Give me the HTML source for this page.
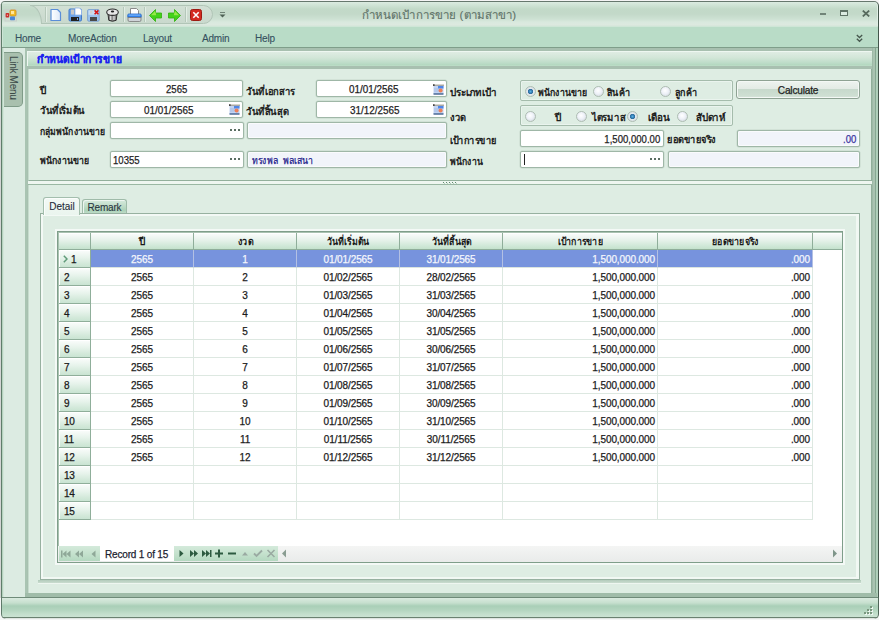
<!DOCTYPE html>
<html><head><meta charset="utf-8">
<style>
*{box-sizing:border-box;margin:0;padding:0}
html,body{width:879px;height:620px;overflow:hidden;background:#f4f4f4}
body{font-family:"Liberation Sans",sans-serif;font-size:11px;color:#222;position:relative;-webkit-text-stroke-width:0.25px}
.a{position:absolute}
.win{left:1px;top:1px;width:878px;height:618px;background:#dfeee5;border:1px solid #5f7d6a;border-top-color:#66776d;border-right-color:#43564b;border-radius:4px 5px 0 0}
.title{left:2px;top:2px;width:875px;height:24px;background:linear-gradient(#dcebe1 0,#d3e6d9 2px,#c2d9c8 7px,#c3d9c9 12px,#cde1d3 17px,#d9e9de 20px,#dde9e0 23px,#d3e5d8 24px);border-radius:3px 4px 0 0}
.menubar{left:2px;top:26px;width:876px;height:22px;background:#b9dcc7;border-top:1px solid #cfe6d7;border-bottom:1px solid #7f9e8a;box-shadow:inset 1px 0 0 #cde5d6}
.menubar span{position:absolute;top:6px;color:#34505e;font-size:10px;letter-spacing:-0.2px;-webkit-text-stroke-width:0.1px}
.lbl{position:absolute;font-size:10px;color:#161616;white-space:nowrap;transform-origin:0 0;-webkit-text-stroke:0.4px #161616}
.inp{position:absolute;height:17px;background:#fff;border:1px solid #9fb7a7;border-radius:2px;box-shadow:0 0 0 0.5px #c5d7cb}
.inp .t{position:absolute;top:1px;font-size:11px;line-height:14px;color:#1e1e1e;white-space:nowrap;letter-spacing:0;transform:scaleX(0.87);transform-origin:0 0}
.inp .t.rt{transform-origin:100% 0}
.dis{background:#f1f4fa;box-shadow:inset 0 0 0 1px #fafbfd,0 0 0 0.5px #c5d7cb}
.grp{position:absolute;border:1px solid #a5bcac;border-radius:2px;box-shadow:inset 0 0 0 1px #eaf4ee}
.rad{position:absolute;width:11px;height:11px;border-radius:50%;border:1px solid #aebdb3;background:radial-gradient(circle at 45% 40%,#ffffff 0,#eef1f8 45%,#c9d2d6 100%)}
.rad.on{background:radial-gradient(circle at 50% 50%,#5ab0e0 0,#2d72ab 2px,#3a6f95 2.4px,#e4eaee 3px,#cdd5d9 100%)}
.btn{border:1px solid #8ea293;border-radius:3px;background:linear-gradient(#eef3ef 0,#e3ebe5 45%,#c7d9cc 50%,#cfdfd3 90%,#e6efe8);box-shadow:inset 0 0 0 1px #f4f8f5;text-align:center;line-height:18px;font-size:11px;color:#222;letter-spacing:-0.2px}
.gh{position:absolute;height:17px;background:linear-gradient(#fbfdfc,#e6f2ea 45%,#d0e8d8 80%,#c4e2cd);border-right:1px solid #8fae9a;border-bottom:1px solid #8fae9a;box-shadow:inset 0 1px 0 #fff;font-size:10px;font-weight:bold;text-align:center;line-height:17px;color:#1a1a1a;white-space:nowrap;-webkit-text-stroke-width:0}
.rh{position:absolute;left:59px;width:32px;height:18px;background:linear-gradient(#fbfdfc,#e9f4ed 40%,#d3e9da 80%,#c9e4d2);border-right:1px solid #8fae9a;border-bottom:1px solid #8fae9a;box-shadow:inset 1px 1px 0 #fff}
.rh span{position:absolute;top:3px;font-size:10px;line-height:14px;color:#1a1a1a;letter-spacing:-0.3px}
.c{position:absolute;height:18px;border-right:1px solid #dde8e1;border-bottom:1px solid #dde8e1;font-size:10px;line-height:17px;text-align:center;white-space:nowrap;color:#1c1c1c;letter-spacing:-0.1px;padding-top:1px}
.c.r{text-align:right;padding-right:2px}
.c.s{background:#7793dd;color:#f4f6fc;border-right-color:#b3c0e3;border-bottom-color:#dbe4df}
</style></head><body>
<div class="a" style="left:0;top:4px;width:1px;height:612px;background:#d3d5d4"></div>
<div class="a win"></div>
<div class="a title"></div>
<!-- QAT pill -->
<div class="a" style="left:30px;top:5px;width:183px;height:19px;background:linear-gradient(#d2e0d5,#c9d9cd);border:1px solid #b1c5b7;border-radius:0 10px 10px 0"></div>
<div class="a" style="left:2px;top:5px;width:40px;height:19px;background:linear-gradient(#c8dccd 0,#c2d9c8 4px,#c3d9c9 9px,#cde1d3 14px,#d9e9de 17px,#dde9e0 19px);border-top:1px solid #b1c5b7;border-right:1px solid #b1c5b7;border-top-right-radius:12px 19px"></div>
<div class="a" style="left:2px;top:4px;width:28px;height:2px;background:#cbdfd0"></div>
<svg class="a" style="left:4px;top:9px" width="14" height="13" viewBox="0 0 14 13">
<rect x="1" y="0.5" width="11.5" height="11.5" fill="none" stroke="#c9cfcb" stroke-width="1"/>
<rect x="6" y="1" width="6" height="6" rx="1" fill="#f2bd2a" stroke="#c8901a" stroke-width="0.8"/>
<rect x="7" y="2" width="3" height="3" fill="#ffe69a"/>
<rect x="1.6" y="4" width="3.6" height="4.6" rx="0.8" fill="#c9302c"/>
<rect x="2.8" y="5.6" width="1.2" height="1.2" fill="#f6b0b0"/>
<rect x="6" y="7.6" width="5" height="3.6" rx="0.8" fill="#4c86d8"/>
</svg>
<div class="a" style="left:45px;top:7px;width:1px;height:15px;background:#b5c8ba;box-shadow:1px 0 0 #e3eee6"></div>
<div class="a" style="left:123px;top:7px;width:1px;height:15px;background:#b5c8ba;box-shadow:1px 0 0 #e3eee6"></div>
<div class="a" style="left:144px;top:7px;width:1px;height:15px;background:#b5c8ba;box-shadow:1px 0 0 #e3eee6"></div>
<div class="a" style="left:185px;top:7px;width:1px;height:15px;background:#b5c8ba;box-shadow:1px 0 0 #e3eee6"></div>
<!-- new doc -->
<svg class="a" style="left:50px;top:8px" width="12" height="14" viewBox="0 0 12 14">
<defs><linearGradient id="gd" x1="0" x2="1"><stop offset="0" stop-color="#ffffff"/><stop offset="1" stop-color="#dfe9f8"/></linearGradient></defs>
<path d="M1 1.5 H7.5 L10.5 4.5 V12.5 H1 Z" fill="url(#gd)" stroke="#5a8ed8" stroke-width="1.2" stroke-linejoin="round"/>
</svg>
<!-- save -->
<svg class="a" style="left:68px;top:7px" width="15" height="15" viewBox="0 0 15 15">
<rect x="1" y="2" width="12.5" height="12" rx="1.2" fill="#6fa4e8" stroke="#3f78c8" stroke-width="1"/>
<rect x="3" y="2.5" width="3" height="5" fill="#c8c8c8"/>
<path d="M7 1 H11.5 L13.5 3 V8 H7 Z" fill="#fff" stroke="#8fb4e8" stroke-width="0.8"/>
<rect x="3" y="10" width="8" height="4" fill="#222"/>
<rect x="9" y="11" width="1" height="2" fill="#6fa4e8"/>
</svg>
<!-- save x -->
<svg class="a" style="left:87px;top:9px" width="13" height="13" viewBox="0 0 13 13">
<rect x="0.6" y="0.6" width="11.6" height="11.6" rx="1.2" fill="#9cc4ee" stroke="#7b9fcf" stroke-width="0.9"/>
<rect x="1.5" y="1.3" width="9.5" height="4.5" fill="#c6def6"/>
<rect x="3" y="1.6" width="2.4" height="3" fill="#d2d2d2"/>
<rect x="3" y="8" width="7" height="4" fill="#4a4a4a"/>
<path d="M7.6 1.4 L11.4 5.2 M11.4 1.4 L7.6 5.2" stroke="#d41414" stroke-width="1.6"/>
</svg>
<!-- trash -->
<svg class="a" style="left:106px;top:8px" width="13" height="14" viewBox="0 0 13 14">
<path d="M1.8 4.5 L2.8 12.3 Q6.5 14.2 10.2 12.3 L11.2 4.5 Z" fill="#8c8c8c" stroke="#2e2e2e" stroke-width="1"/>
<rect x="4" y="7" width="1.3" height="5" fill="#d9d9d9"/><rect x="7.3" y="7" width="1.3" height="5" fill="#d9d9d9"/>
<ellipse cx="6.5" cy="4.2" rx="5.8" ry="3.2" fill="#e6e6e6" stroke="#2e2e2e" stroke-width="1.1"/>
<ellipse cx="6.5" cy="3.6" rx="1.7" ry="1" fill="#222"/>
</svg>
<!-- printer -->
<svg class="a" style="left:127px;top:8px" width="15" height="14" viewBox="0 0 15 14">
<path d="M3.5 0.5 H9.5 L11.5 2.5 V7 H3.5 Z" fill="#fff" stroke="#8a8a8a" stroke-width="1"/>
<rect x="0.8" y="6" width="13.4" height="4" rx="1" fill="#2f7ee8" stroke="#1f5fc0" stroke-width="0.8"/>
<rect x="1.5" y="6.5" width="12" height="1.2" fill="#78b8ff"/>
<path d="M1 9.5 H14 V12 Q14 13.5 12.5 13.5 H2.5 Q1 13.5 1 12 Z" fill="#cfd3d8" stroke="#777" stroke-width="0.8"/>
</svg>
<!-- left arrow -->
<svg class="a" style="left:149px;top:9px" width="13" height="13" viewBox="0 0 13 13">
<path d="M0.5 6.5 L6.5 0.5 V4 H12.5 V9 H6.5 V12.5 Z" fill="#44d21a" stroke="#2fb00c" stroke-width="0.8" stroke-linejoin="round"/>
<path d="M6 2 L2 6.3 H7 V4.5" fill="#b8f25a" opacity="0.7"/>
</svg>
<!-- right arrow -->
<svg class="a" style="left:168px;top:9px" width="13" height="13" viewBox="0 0 13 13">
<path d="M12.5 6.5 L6.5 0.5 V4 H0.5 V9 H6.5 V12.5 Z" fill="#44d21a" stroke="#2fb00c" stroke-width="0.8" stroke-linejoin="round"/>
<path d="M7 2 L11 6.3 H6 V4.5" fill="#b8f25a" opacity="0.7"/>
</svg>
<!-- red x -->
<svg class="a" style="left:190px;top:9px" width="12" height="12" viewBox="0 0 12 12">
<rect x="0.5" y="0.5" width="11" height="11" rx="2" fill="#d42a20" stroke="#9c1a12" stroke-width="1"/>
<path d="M3.3 3.3 L8.7 8.7 M8.7 3.3 L3.3 8.7" stroke="#fff" stroke-width="1.6"/>
</svg>
<!-- dropdown -->
<svg class="a" style="left:219px;top:12px" width="7" height="6" viewBox="0 0 7 6">
<rect x="1" y="0" width="5" height="1" fill="#6f8276"/><path d="M0.5 2.5 H6.5 L3.5 5.5 Z" fill="#4f6256"/>
</svg>
<div class="a" style="left:299px;top:6px;width:280px;text-align:center;font-size:11.5px;letter-spacing:0.12px;color:#5f7268;-webkit-text-stroke-width:0.1px">กำหนดเป้าการขาย (ตามสาขา)</div>
<!-- window buttons -->
<div class="a" style="left:820px;top:13px;width:6px;height:2px;background:#687a6f;opacity:.9"></div>
<div class="a" style="left:840px;top:10px;width:8px;height:6px;border:1px solid #5f7266;border-top-width:2px;background:#dcebe1"></div>
<svg class="a" style="left:862px;top:10px" width="8" height="7" viewBox="0 0 8 7"><path d="M0.8 0.6 L7.2 6.4 M7.2 0.6 L0.8 6.4" stroke="#56695d" stroke-width="1.8"/></svg>
<div class="a menubar">
<span style="left:13px">Home</span>
<span style="left:66px">MoreAction</span>
<span style="left:141px">Layout</span>
<span style="left:200px">Admin</span>
<span style="left:253px">Help</span>
</div>
<svg class="a" style="left:856px;top:34px" width="7" height="9" viewBox="0 0 7 9"><path d="M0.8 1 L3.5 3.5 L6.2 1 M0.8 4.8 L3.5 7.3 L6.2 4.8" fill="none" stroke="#46574d" stroke-width="1.3"/></svg>
<!-- left link menu -->
<div class="a" style="left:2px;top:48px;width:23px;height:550px;background:#dcebe2;border-left:1px solid #b5d3bf;box-shadow:inset 1px 0 0 #d2e5d8"></div>
<div class="a" style="left:4px;top:52px;width:19px;height:55px;background:#a9c0ae;border:1px solid #7f9b88;border-left:none;border-radius:0 5px 5px 0"></div>
<div class="a" style="left:-8px;top:71px;width:42px;height:12px;transform:rotate(90deg);font-size:10px;line-height:12px;letter-spacing:-0.3px;color:#3c4a48;-webkit-text-stroke-width:0.05px;text-align:center;white-space:nowrap">Link Menu</div>
<!-- main panel border -->
<div class="a" style="left:25px;top:48px;width:853px;height:550px;background:#a8c0b0"></div>
<div class="a" style="left:25px;top:48px;width:2px;height:550px;background:#a9c4b2"></div>
<div class="a" style="left:27px;top:51px;width:847px;height:15px;background:linear-gradient(#eef7f1 0,#eef7f1 1px,#dfece3 1px,#d2e6d8 45%,#bddcc8 80%,#b3d8bf 93%,#c0dfca);border-left:1px solid #eef7f1;border-right:1px solid #c9dccf"></div>
<div class="a" style="left:37px;top:50px;font-size:11px;font-weight:bold;color:#1a22ee;white-space:nowrap;transform:scaleX(0.93);transform-origin:0 0">กำหนดเป้าการขาย</div>
<div class="a" style="left:28px;top:69px;width:844px;height:112px;background:#deede3;border-left:1px solid #c6dccd;border-right:1px solid #90ae9a;border-bottom:1px solid #93b09c"></div>
<!-- splitter -->
<div class="a" style="left:28px;top:181px;width:844px;height:3px;background:#eef6f0"></div>
<div class="a" style="left:28px;top:184px;width:844px;height:1px;background:#9ab8a3"></div>
<div class="a" style="left:443px;top:182px;width:15px;height:1px;background:repeating-linear-gradient(90deg,#5f8a6e 0 1px,transparent 1px 3px)"></div><div class="a" style="left:444px;top:183px;width:15px;height:1px;background:repeating-linear-gradient(90deg,#b8d0c0 0 1px,transparent 1px 3px)"></div>
<div class="a" style="left:28px;top:185px;width:844px;height:408px;background:#deede3;border-left:1px solid #c6dccd;border-right:1px solid #90ae9a"></div>
<div class="a" style="left:872px;top:48px;width:4px;height:550px;background:#a9c3b1;border-left:1px solid #9db9a6"></div>
<div class="a" style="left:875px;top:48px;width:1px;height:550px;background:#86a892"></div>
<div class="a" style="left:876px;top:48px;width:2px;height:550px;background:#b0d0bb"></div>
<!-- form -->
<div class="lbl" style="left:40px;top:83px;transform:scaleX(1)">ปี</div>
<div class="lbl" style="left:40px;top:103px;transform:scaleX(0.93)">วันที่เริ่มต้น</div>
<div class="lbl" style="left:40px;top:124px;transform:scaleX(0.86)">กลุ่มพนักงานขาย</div>
<div class="lbl" style="left:40px;top:153px;transform:scaleX(0.87)">พนักงานขาย</div>
<div class="lbl" style="left:246px;top:84px;transform:scaleX(0.94)">วันที่เอกสาร</div>
<div class="lbl" style="left:246px;top:104px;transform:scaleX(0.94)">วันที่สิ้นสุด</div>
<div class="lbl" style="left:450px;top:85px;transform:scaleX(0.98)">ประเภทเป้า</div>
<div class="lbl" style="left:450px;top:110px;transform:scaleX(0.93)">งวด</div>
<div class="lbl" style="left:450px;top:133px;transform:scaleX(0.92)">เป้าการขาย</div>
<div class="lbl" style="left:667px;top:132px;transform:scaleX(0.92)">ยอดขายจริง</div>
<div class="lbl" style="left:450px;top:154px;transform:scaleX(0.86)">พนักงาน</div>
<div class="inp" style="left:110px;top:80px;width:133px"><span class="t" style="left:55px">2565</span></div>
<div class="inp" style="left:110px;top:101px;width:133px"><span class="t" style="left:33px;transform:scaleX(0.9)">01/01/2565</span></div><svg class="a" style="left:229px;top:104px" width="11" height="11" viewBox="0 0 11 11"><rect x="0.5" y="1.5" width="10" height="8.5" fill="#c2d4f4"/><rect x="5" y="2" width="5.5" height="2.5" fill="#4f86e6"/><rect x="0" y="0.6" width="11" height="1.2" fill="#9c9a90"/><rect x="0" y="0.3" width="1.6" height="1.6" fill="#3a3a3a"/><path d="M1 5 H6 M1 7 H6" stroke="#9bb2d8" stroke-width="0.7"/><circle cx="7.6" cy="6.6" r="2" fill="#ee7f56"/><rect x="0.5" y="9.3" width="10" height="1.4" fill="#41618f"/></svg>
<div class="inp" style="left:110px;top:122px;width:134px"></div><div class="a" style="left:230px;top:129px;width:11px;height:2px;background:radial-gradient(circle at 1px 1px,#5a6e62 0.75px,transparent 1.1px) 0 0/4px 2px repeat-x"></div>
<div class="inp" style="left:110px;top:151px;width:134px"><span class="t" style="left:2px">10355</span></div><div class="a" style="left:230px;top:158px;width:11px;height:2px;background:radial-gradient(circle at 1px 1px,#5a6e62 0.75px,transparent 1.1px) 0 0/4px 2px repeat-x"></div>
<div class="inp" style="left:316px;top:80px;width:131px"><span class="t" style="left:32px;transform:scaleX(0.9)">01/01/2565</span></div><svg class="a" style="left:433px;top:84px" width="11" height="11" viewBox="0 0 11 11"><rect x="0.5" y="1.5" width="10" height="8.5" fill="#c2d4f4"/><rect x="5" y="2" width="5.5" height="2.5" fill="#4f86e6"/><rect x="0" y="0.6" width="11" height="1.2" fill="#9c9a90"/><rect x="0" y="0.3" width="1.6" height="1.6" fill="#3a3a3a"/><path d="M1 5 H6 M1 7 H6" stroke="#9bb2d8" stroke-width="0.7"/><circle cx="7.6" cy="6.6" r="2" fill="#ee7f56"/><rect x="0.5" y="9.3" width="10" height="1.4" fill="#41618f"/></svg>
<div class="inp" style="left:316px;top:101px;width:131px"><span class="t" style="left:33px;transform:scaleX(0.9)">31/12/2565</span></div><svg class="a" style="left:433px;top:104px" width="11" height="11" viewBox="0 0 11 11"><rect x="0.5" y="1.5" width="10" height="8.5" fill="#c2d4f4"/><rect x="5" y="2" width="5.5" height="2.5" fill="#4f86e6"/><rect x="0" y="0.6" width="11" height="1.2" fill="#9c9a90"/><rect x="0" y="0.3" width="1.6" height="1.6" fill="#3a3a3a"/><path d="M1 5 H6 M1 7 H6" stroke="#9bb2d8" stroke-width="0.7"/><circle cx="7.6" cy="6.6" r="2" fill="#ee7f56"/><rect x="0.5" y="9.3" width="10" height="1.4" fill="#41618f"/></svg>
<div class="inp dis" style="left:247px;top:122px;width:200px"></div>
<div class="inp dis" style="left:247px;top:151px;width:200px"><span class="t" style="left:4px;color:#22228a;font-size:10px;top:2px">ทรงพล&nbsp; พลเสนา</span></div>
<div class="grp" style="left:520px;top:80px;width:213px;height:21px"></div>
<div class="grp" style="left:520px;top:105px;width:213px;height:21px"></div>
<div class="rad on" style="left:525px;top:86px"></div><div class="lbl" style="left:538px;top:85px;transform:scaleX(0.87)">พนักงานขาย</div><div class="rad" style="left:593px;top:86px"></div><div class="lbl" style="left:607px;top:85px;transform:scaleX(0.9)">สินค้า</div><div class="rad" style="left:660px;top:86px"></div><div class="lbl" style="left:675px;top:85px;transform:scaleX(0.9)">ลูกค้า</div>
<div class="rad" style="left:525px;top:111px"></div><div class="lbl" style="left:555px;top:110px;transform:scaleX(1)">ปี</div><div class="rad" style="left:576px;top:111px"></div><div class="lbl" style="left:592px;top:110px;transform:scaleX(0.95)">ไตรมาส</div><div class="rad on" style="left:627px;top:111px"></div><div class="lbl" style="left:648px;top:110px;transform:scaleX(0.98)">เดือน</div><div class="rad" style="left:677px;top:111px"></div><div class="lbl" style="left:696px;top:110px;transform:scaleX(0.97)">สัปดาห์</div>
<div class="a btn" style="left:736px;top:80px;width:124px;height:19px"><span style="display:inline-block;transform:scaleX(0.92)">Calculate</span></div>
<div class="inp" style="left:520px;top:130px;width:144px"><span class="t rt" style="right:3px">1,500,000.00</span></div>
<div class="inp dis" style="left:737px;top:130px;width:123px"><span class="t rt" style="right:3px;color:#3a35a0">.00</span></div>
<div class="inp" style="left:520px;top:151px;width:144px"><div class="a" style="left:3px;top:2px;width:1px;height:11px;background:#222"></div></div><div class="a" style="left:650px;top:158px;width:11px;height:2px;background:radial-gradient(circle at 1px 1px,#5a6e62 0.75px,transparent 1.1px) 0 0/4px 2px repeat-x"></div>
<div class="inp dis" style="left:668px;top:151px;width:192px"></div>
<!-- tabs -->
<div class="a" style="left:40px;top:213px;width:820px;height:367px;background:#deede3;border:1px solid #97b1a0;box-shadow:inset 2px 2px 0 #f3f9f5,inset -3px -2px 0 #f1f8f3"></div>
<div class="a" style="left:43px;top:197px;width:37px;height:18px;background:linear-gradient(#f3f9f5,#eaf5ee);border:1px solid #a3bead;border-bottom:none;border-radius:3px 3px 0 0;box-shadow:inset 1px 1px 0 #fbfdfc"></div>
<div class="a" style="left:43px;top:201px;width:37px;text-align:center;font-size:10px;letter-spacing:0px;text-indent:1px;color:#242c3a;white-space:nowrap;-webkit-text-stroke-width:0.1px">Detail</div>
<div class="a" style="left:82px;top:199px;width:45px;height:14px;background:linear-gradient(#d6eadd,#c0ddc9 45%,#acd2b9 80%,#bcdbc6);border:1px solid #9fbba9;border-bottom:none;border-radius:3px 3px 0 0;box-shadow:inset 1px 1px 0 #eef6f0"></div>
<div class="a" style="left:82px;top:202px;width:45px;text-align:center;font-size:10px;letter-spacing:-0.2px;color:#2a3640;white-space:nowrap;-webkit-text-stroke-width:0.1px">Remark</div>
<!-- grid -->
<div class="a" style="left:55px;top:229px;width:790px;height:336px;background:#f4f9f6"></div>
<div class="a" style="left:57px;top:231px;width:786px;height:332px;background:#fff;border:1px solid #7f9e8a;box-shadow:inset 1px 1px 0 #a9c2b1"></div>
<div class="gh" style="left:59px;top:233px;width:32px"></div>
<div class="gh" style="left:91px;top:233px;width:103px"><span style="display:inline-block;transform:scaleX(1)">ปี</span></div>
<div class="gh" style="left:194px;top:233px;width:103px"><span style="display:inline-block;transform:scaleX(0.9)">งวด</span></div>
<div class="gh" style="left:297px;top:233px;width:103px"><span style="display:inline-block;transform:scaleX(0.88)">วันที่เริ่มต้น</span></div>
<div class="gh" style="left:400px;top:233px;width:103px"><span style="display:inline-block;transform:scaleX(0.88)">วันที่สิ้นสุด</span></div>
<div class="gh" style="left:503px;top:233px;width:155px"><span style="display:inline-block;transform:scaleX(0.88)">เป้าการขาย</span></div>
<div class="gh" style="left:658px;top:233px;width:155px"><span style="display:inline-block;transform:scaleX(0.88)">ยอดขายจริง</span></div>
<div class="gh" style="left:813px;top:233px;width:29px;border-right:none"></div>
<div class="rh" style="top:250px"><svg class="a" style="left:4px;top:5px" width="5" height="8" viewBox="0 0 5 8"><path d="M0.8 0.8 L4 4 L0.8 7.2" fill="none" stroke="#5f9a78" stroke-width="1.5"/></svg><span style="left:12px">1</span></div>
<div class="c s" style="left:91px;top:250px;width:103px">2565</div>
<div class="c s" style="left:194px;top:250px;width:103px">1</div>
<div class="c s" style="left:297px;top:250px;width:103px">01/01/2565</div>
<div class="c s" style="left:400px;top:250px;width:103px">31/01/2565</div>
<div class="c r s" style="left:503px;top:250px;width:155px">1,500,000.000</div>
<div class="c r s" style="left:658px;top:250px;width:155px">.000</div>
<div class="rh" style="top:268px"><span style="left:5px">2</span></div>
<div class="c" style="left:91px;top:268px;width:103px">2565</div>
<div class="c" style="left:194px;top:268px;width:103px">2</div>
<div class="c" style="left:297px;top:268px;width:103px">01/02/2565</div>
<div class="c" style="left:400px;top:268px;width:103px">28/02/2565</div>
<div class="c r" style="left:503px;top:268px;width:155px">1,500,000.000</div>
<div class="c r" style="left:658px;top:268px;width:155px">.000</div>
<div class="rh" style="top:286px"><span style="left:5px">3</span></div>
<div class="c" style="left:91px;top:286px;width:103px">2565</div>
<div class="c" style="left:194px;top:286px;width:103px">3</div>
<div class="c" style="left:297px;top:286px;width:103px">01/03/2565</div>
<div class="c" style="left:400px;top:286px;width:103px">31/03/2565</div>
<div class="c r" style="left:503px;top:286px;width:155px">1,500,000.000</div>
<div class="c r" style="left:658px;top:286px;width:155px">.000</div>
<div class="rh" style="top:304px"><span style="left:5px">4</span></div>
<div class="c" style="left:91px;top:304px;width:103px">2565</div>
<div class="c" style="left:194px;top:304px;width:103px">4</div>
<div class="c" style="left:297px;top:304px;width:103px">01/04/2565</div>
<div class="c" style="left:400px;top:304px;width:103px">30/04/2565</div>
<div class="c r" style="left:503px;top:304px;width:155px">1,500,000.000</div>
<div class="c r" style="left:658px;top:304px;width:155px">.000</div>
<div class="rh" style="top:322px"><span style="left:5px">5</span></div>
<div class="c" style="left:91px;top:322px;width:103px">2565</div>
<div class="c" style="left:194px;top:322px;width:103px">5</div>
<div class="c" style="left:297px;top:322px;width:103px">01/05/2565</div>
<div class="c" style="left:400px;top:322px;width:103px">31/05/2565</div>
<div class="c r" style="left:503px;top:322px;width:155px">1,500,000.000</div>
<div class="c r" style="left:658px;top:322px;width:155px">.000</div>
<div class="rh" style="top:340px"><span style="left:5px">6</span></div>
<div class="c" style="left:91px;top:340px;width:103px">2565</div>
<div class="c" style="left:194px;top:340px;width:103px">6</div>
<div class="c" style="left:297px;top:340px;width:103px">01/06/2565</div>
<div class="c" style="left:400px;top:340px;width:103px">30/06/2565</div>
<div class="c r" style="left:503px;top:340px;width:155px">1,500,000.000</div>
<div class="c r" style="left:658px;top:340px;width:155px">.000</div>
<div class="rh" style="top:358px"><span style="left:5px">7</span></div>
<div class="c" style="left:91px;top:358px;width:103px">2565</div>
<div class="c" style="left:194px;top:358px;width:103px">7</div>
<div class="c" style="left:297px;top:358px;width:103px">01/07/2565</div>
<div class="c" style="left:400px;top:358px;width:103px">31/07/2565</div>
<div class="c r" style="left:503px;top:358px;width:155px">1,500,000.000</div>
<div class="c r" style="left:658px;top:358px;width:155px">.000</div>
<div class="rh" style="top:376px"><span style="left:5px">8</span></div>
<div class="c" style="left:91px;top:376px;width:103px">2565</div>
<div class="c" style="left:194px;top:376px;width:103px">8</div>
<div class="c" style="left:297px;top:376px;width:103px">01/08/2565</div>
<div class="c" style="left:400px;top:376px;width:103px">31/08/2565</div>
<div class="c r" style="left:503px;top:376px;width:155px">1,500,000.000</div>
<div class="c r" style="left:658px;top:376px;width:155px">.000</div>
<div class="rh" style="top:394px"><span style="left:5px">9</span></div>
<div class="c" style="left:91px;top:394px;width:103px">2565</div>
<div class="c" style="left:194px;top:394px;width:103px">9</div>
<div class="c" style="left:297px;top:394px;width:103px">01/09/2565</div>
<div class="c" style="left:400px;top:394px;width:103px">30/09/2565</div>
<div class="c r" style="left:503px;top:394px;width:155px">1,500,000.000</div>
<div class="c r" style="left:658px;top:394px;width:155px">.000</div>
<div class="rh" style="top:412px"><span style="left:5px">10</span></div>
<div class="c" style="left:91px;top:412px;width:103px">2565</div>
<div class="c" style="left:194px;top:412px;width:103px">10</div>
<div class="c" style="left:297px;top:412px;width:103px">01/10/2565</div>
<div class="c" style="left:400px;top:412px;width:103px">31/10/2565</div>
<div class="c r" style="left:503px;top:412px;width:155px">1,500,000.000</div>
<div class="c r" style="left:658px;top:412px;width:155px">.000</div>
<div class="rh" style="top:430px"><span style="left:5px">11</span></div>
<div class="c" style="left:91px;top:430px;width:103px">2565</div>
<div class="c" style="left:194px;top:430px;width:103px">11</div>
<div class="c" style="left:297px;top:430px;width:103px">01/11/2565</div>
<div class="c" style="left:400px;top:430px;width:103px">30/11/2565</div>
<div class="c r" style="left:503px;top:430px;width:155px">1,500,000.000</div>
<div class="c r" style="left:658px;top:430px;width:155px">.000</div>
<div class="rh" style="top:448px"><span style="left:5px">12</span></div>
<div class="c" style="left:91px;top:448px;width:103px">2565</div>
<div class="c" style="left:194px;top:448px;width:103px">12</div>
<div class="c" style="left:297px;top:448px;width:103px">01/12/2565</div>
<div class="c" style="left:400px;top:448px;width:103px">31/12/2565</div>
<div class="c r" style="left:503px;top:448px;width:155px">1,500,000.000</div>
<div class="c r" style="left:658px;top:448px;width:155px">.000</div>
<div class="rh" style="top:466px"><span style="left:5px">13</span></div>
<div class="c" style="left:91px;top:466px;width:103px"></div>
<div class="c" style="left:194px;top:466px;width:103px"></div>
<div class="c" style="left:297px;top:466px;width:103px"></div>
<div class="c" style="left:400px;top:466px;width:103px"></div>
<div class="c r" style="left:503px;top:466px;width:155px"></div>
<div class="c r" style="left:658px;top:466px;width:155px"></div>
<div class="rh" style="top:484px"><span style="left:5px">14</span></div>
<div class="c" style="left:91px;top:484px;width:103px"></div>
<div class="c" style="left:194px;top:484px;width:103px"></div>
<div class="c" style="left:297px;top:484px;width:103px"></div>
<div class="c" style="left:400px;top:484px;width:103px"></div>
<div class="c r" style="left:503px;top:484px;width:155px"></div>
<div class="c r" style="left:658px;top:484px;width:155px"></div>
<div class="rh" style="top:502px"><span style="left:5px">15</span></div>
<div class="c" style="left:91px;top:502px;width:103px"></div>
<div class="c" style="left:194px;top:502px;width:103px"></div>
<div class="c" style="left:297px;top:502px;width:103px"></div>
<div class="c" style="left:400px;top:502px;width:103px"></div>
<div class="c r" style="left:503px;top:502px;width:155px"></div>
<div class="c r" style="left:658px;top:502px;width:155px"></div>
<div class="a" style="left:58px;top:546px;width:784px;height:16px;background:linear-gradient(#f4f5f4,#e9ebea)"></div>
<div class="a" style="left:59px;top:546px;width:41px;height:15px;background:linear-gradient(#d4eadb,#c2e0cb 60%,#b4d8c0)"></div>
<div class="a" style="left:100px;top:546px;width:74px;height:15px;background:#fff"></div>
<div class="a" style="left:105px;top:548px;font-size:11px;letter-spacing:-0.2px;color:#1b2230;white-space:nowrap;transform:scaleX(0.91);transform-origin:0 0">Record 1 of 15</div>
<div class="a" style="left:174px;top:546px;width:104px;height:15px;background:linear-gradient(#d4eadb,#c2e0cb 60%,#b4d8c0)"></div>
<svg class="a" style="left:60px;top:549px" width="40" height="10" viewBox="0 0 40 10">
<rect x="1" y="1.5" width="1.5" height="7" fill="#8fa898"/><path d="M6.5 1.5 L2.5 5 L6.5 8.5 Z M10.5 1.5 L6.5 5 L10.5 8.5 Z" fill="#8fa898"/>
<path d="M19 1.5 L15 5 L19 8.5 Z M23 1.5 L19 5 L23 8.5 Z" fill="#8fa898"/>
<path d="M35.5 1.5 L31.5 5 L35.5 8.5 Z" fill="#8fa898"/></svg>
<svg class="a" style="left:178px;top:548px" width="100" height="11" viewBox="0 0 100 11">
<path d="M1.5 2 L5.5 5.5 L1.5 9 Z" fill="#2d5a40"/>
<path d="M12 2 L16 5.5 L12 9 Z M16 2 L20 5.5 L16 9 Z" fill="#2d5a40"/>
<path d="M24 2 L28 5.5 L24 9 Z M28 2 L32 5.5 L28 9 Z" fill="#2d5a40"/><rect x="32" y="2" width="1.5" height="7" fill="#2d5a40"/>
<path d="M37 5.5 H45 M41 1.5 V9.5" stroke="#2d5a40" stroke-width="2"/>
<path d="M50 5.5 H58" stroke="#2d5a40" stroke-width="2"/>
<path d="M64 7.5 L67 4 L70 7.5 Z" fill="#9aaaa2"/>
<path d="M76 5.5 L78.5 8 L84 2.5" fill="none" stroke="#9aaaa2" stroke-width="1.8"/>
<path d="M89.5 2 L96.5 9 M96.5 2 L89.5 9" stroke="#9aaaa2" stroke-width="1.6"/>
</svg>
<svg class="a" style="left:281px;top:549px" width="6" height="9" viewBox="0 0 6 9"><path d="M5 0.5 L1 4.5 L5 8.5 Z" fill="#8a9d92"/></svg>
<svg class="a" style="left:832px;top:549px" width="6" height="9" viewBox="0 0 6 9"><path d="M1 0.5 L5 4.5 L1 8.5 Z" fill="#7f958a"/></svg>
<!-- status bar -->
<div class="a" style="left:38px;top:580px;width:823px;height:3px;background:linear-gradient(#b3cbbb,#c9dccf)"></div>
<div class="a" style="left:38px;top:583px;width:823px;height:1px;background:#eef6f0"></div>
<div class="a" style="left:25px;top:593px;width:852px;height:4px;background:#a0bca9"></div>
<div class="a" style="left:1px;top:597px;width:877px;height:1px;background:#6f8b79"></div>
<div class="a" style="left:0px;top:598px;width:879px;height:22px;background:#f4f6f5"></div>
<div class="a" style="left:1px;top:597px;width:878px;height:22px;background:linear-gradient(#6f8b79 0,#6f8b79 1px,#d9eadf 1px,#d2e6d8 3px,#c6dfce 6px,#a9cfb7 9px,#b3d5bf 13px,#c3dfcc 17px,#cbe3d3 20px,#6a8270 20px,#6a8270 21px,#dfe5e1 21px);border-left:1px solid #5f7a6a;border-right:1px solid #4f6658;border-radius:0 0 5px 5px"></div>
<svg class="a" style="left:863px;top:605px" width="11" height="11" viewBox="0 0 11 11">
<g fill="#eef7f1" id="gtmp"><rect x="8" y="2" width="2" height="2"/><rect x="5" y="5" width="2" height="2"/><rect x="8" y="5" width="2" height="2"/><rect x="2" y="8" width="2" height="2"/><rect x="5" y="8" width="2" height="2"/><rect x="8" y="8" width="2" height="2"/></g>
<g fill="#7a977f"><rect x="7" y="1" width="2" height="2"/><rect x="4" y="4" width="2" height="2"/><rect x="7" y="4" width="2" height="2"/><rect x="1" y="7" width="2" height="2"/><rect x="4" y="7" width="2" height="2"/><rect x="7" y="7" width="2" height="2"/></g>
</svg>
</body></html>
